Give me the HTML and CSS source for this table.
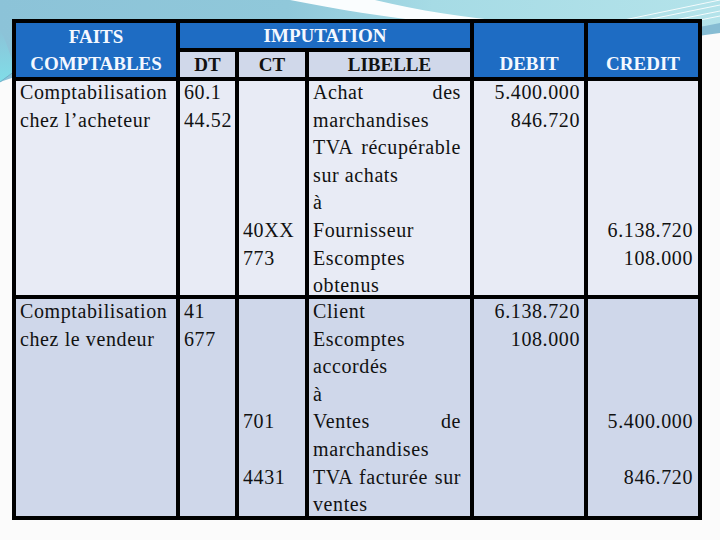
FILE: index.html
```html
<!DOCTYPE html>
<html lang="fr">
<head>
<meta charset="utf-8">
<title>Comptabilisation des escomptes</title>
<link rel="stylesheet" href="styles.css">
</head>
<body>
<svg class="deco" width="720" height="540" viewBox="0 0 720 540" aria-hidden="true">
  <defs>
    <linearGradient id="sky" x1="0" y1="0" x2="1" y2="0">
      <stop offset="0" stop-color="#8cc3d8"/>
      <stop offset="0.4" stop-color="#90c8da"/>
      <stop offset="0.6" stop-color="#a6dbe5"/>
      <stop offset="1" stop-color="#b4e3ea"/>
    </linearGradient>
    <linearGradient id="cyan" x1="0" y1="0" x2="0" y2="1">
      <stop offset="0" stop-color="#8cc3d8"/>
      <stop offset="1" stop-color="#80dde8"/>
    </linearGradient>
  </defs>
  <rect width="720" height="540" fill="#fbfbfb"/>
  <path d="M0,0 H720 V26 C640,40 560,30 470,24 C300,14 120,40 0,82 Z" fill="url(#sky)"/>
  <path d="M0,30 C6,40 10,55 16,70 L0,82 Z" fill="url(#cyan)"/>
  <path d="M290,0 C335,9 385,17 440,23 C470,26 500,25 530,23 C480,20 425,12 375,0 Z" fill="#ffffff" opacity="0.95"/>
  <path d="M600,25 L720,0 M612,27 L720,5 M625,30 L720,11 M640,32 L720,16" stroke="#ffffff" stroke-width="1" fill="none" opacity="0.85"/>
  <path d="M650,36 C680,30 700,27 720,23 V33 C700,35 680,40 662,44 Z" fill="#86bcd3"/>
  <path d="M0,82 L15,71" stroke="#6fb2c9" stroke-width="1" fill="none"/>
</svg>

<main class="slide">
  <table class="journal">
    <colgroup>
      <col class="c-faits">
      <col class="c-dt">
      <col class="c-ct">
      <col class="c-lib">
      <col class="c-deb">
      <col class="c-cred">
    </colgroup>
    <thead>
      <tr>
        <th rowspan="2" class="blue faits">FAITS<br>COMPTABLES</th>
        <th colspan="3" class="blue"><div class="hrow">IMPUTATION</div></th>
        <th rowspan="2" class="blue bottom"><div class="hrow">DEBIT</div></th>
        <th rowspan="2" class="blue bottom"><div class="hrow">CREDIT</div></th>
      </tr>
      <tr>
        <th class="pale"><div class="hrow">DT</div></th>
        <th class="pale"><div class="hrow">CT</div></th>
        <th class="pale"><div class="hrow">LIBELLE</div></th>
      </tr>
    </thead>
    <tbody>
      <tr class="row-a">
        <td><div class="cell"><div class="lines">
          <div class="ln">Comptabilisation</div>
          <div class="ln">chez l’acheteur</div>
        </div></div></td>
        <td><div class="cell"><div class="lines">
          <div class="ln">60.1</div>
          <div class="ln">44.52</div>
        </div></div></td>
        <td><div class="cell"><div class="lines">
          <div class="ln"></div><div class="ln"></div><div class="ln"></div><div class="ln"></div><div class="ln"></div>
          <div class="ln">40XX</div>
          <div class="ln">773</div>
        </div></div></td>
        <td class="lib"><div class="cell"><div class="lines">
          <div class="ln j">Achat des</div>
          <div class="ln">marchandises</div>
          <div class="ln j">TVA récupérable</div>
          <div class="ln">sur achats</div>
          <div class="ln">à</div>
          <div class="ln">Fournisseur</div>
          <div class="ln">Escomptes</div>
          <div class="ln">obtenus</div>
        </div></div></td>
        <td class="num"><div class="cell"><div class="lines">
          <div class="ln">5.400.000</div>
          <div class="ln">846.720</div>
        </div></div></td>
        <td class="num last"><div class="cell"><div class="lines">
          <div class="ln"></div><div class="ln"></div><div class="ln"></div><div class="ln"></div><div class="ln"></div>
          <div class="ln">6.138.720</div>
          <div class="ln">108.000</div>
        </div></div></td>
      </tr>
      <tr class="row-b">
        <td><div class="cell"><div class="lines">
          <div class="ln">Comptabilisation</div>
          <div class="ln">chez le vendeur</div>
        </div></div></td>
        <td><div class="cell"><div class="lines">
          <div class="ln">41</div>
          <div class="ln">677</div>
        </div></div></td>
        <td><div class="cell"><div class="lines">
          <div class="ln"></div><div class="ln"></div><div class="ln"></div><div class="ln"></div>
          <div class="ln">701</div>
          <div class="ln"></div>
          <div class="ln">4431</div>
        </div></div></td>
        <td class="lib"><div class="cell"><div class="lines">
          <div class="ln">Client</div>
          <div class="ln">Escomptes</div>
          <div class="ln">accordés</div>
          <div class="ln">à</div>
          <div class="ln j">Ventes de</div>
          <div class="ln">marchandises</div>
          <div class="ln j">TVA facturée sur</div>
          <div class="ln">ventes</div>
        </div></div></td>
        <td class="num"><div class="cell"><div class="lines">
          <div class="ln">6.138.720</div>
          <div class="ln">108.000</div>
        </div></div></td>
        <td class="num last"><div class="cell"><div class="lines">
          <div class="ln"></div><div class="ln"></div><div class="ln"></div><div class="ln"></div>
          <div class="ln">5.400.000</div>
          <div class="ln"></div>
          <div class="ln">846.720</div>
        </div></div></td>
      </tr>
    </tbody>
  </table>
</main>
</body>
</html>
```

FILE: styles.css
```css
html, body {
  margin: 0;
  padding: 0;
}

body {
  width: 720px;
  height: 540px;
  overflow: hidden;
  background: #fbfbfb;
  font-family: "Liberation Serif", "Times New Roman", serif;
  color: #111111;
}

.deco {
  position: absolute;
  left: 0;
  top: 0;
  z-index: 0;
  display: block;
}

.slide {
  position: relative;
  z-index: 1;
  padding: 19px 0 0 12px;
}

.journal {
  border-collapse: separate;
  border-spacing: 0;
  table-layout: fixed;
  width: 690px;
  border-top: 4px solid #000;
  border-left: 4px solid #000;
}

.c-faits { width: 164px; }
.c-dt    { width: 59px; }
.c-ct    { width: 70px; }
.c-lib   { width: 165px; }
.c-deb   { width: 114px; }
.c-cred  { width: 114px; }

.journal th,
.journal td {
  padding: 0;
  border-right: 4px solid #000;
  border-bottom: 4px solid #000;
  vertical-align: top;
}

/* header */
.journal th {
  font-weight: bold;
  font-size: 19px;
  text-align: center;
}

.blue {
  background: #1e6cc3;
  color: #f4f8ff;
}

.pale {
  background: #d0d8ea;
  color: #111111;
}

.hrow {
  height: 25px;
  line-height: 25px;
}

.faits {
  vertical-align: middle !important;
  line-height: 27px;
}

.bottom {
  vertical-align: bottom !important;
}

.bottom .hrow {
  line-height: 23px;
}

/* body */
.row-a td { background: #e8ebf5; }
.row-b td { background: #cfd7ea; }

.journal td {
  font-size: 20px;
  letter-spacing: 0.6px;
  padding-left: 4px;
  padding-right: 4px;
}

.row-a .cell { height: 216px; }
.row-b .cell { height: 218px; }

.row-a .lines { margin-top: -2px; }
.row-b .lines { margin-top: -1px; }

.ln {
  height: 27.6px;
  line-height: 27.6px;
  white-space: nowrap;
}

.journal td.lib {
  padding-right: 9px;
}

.j {
  text-align: justify;
  text-align-last: justify;
}

.num {
  text-align: right;
}

.journal td.last {
  padding-right: 5px;
}
```
